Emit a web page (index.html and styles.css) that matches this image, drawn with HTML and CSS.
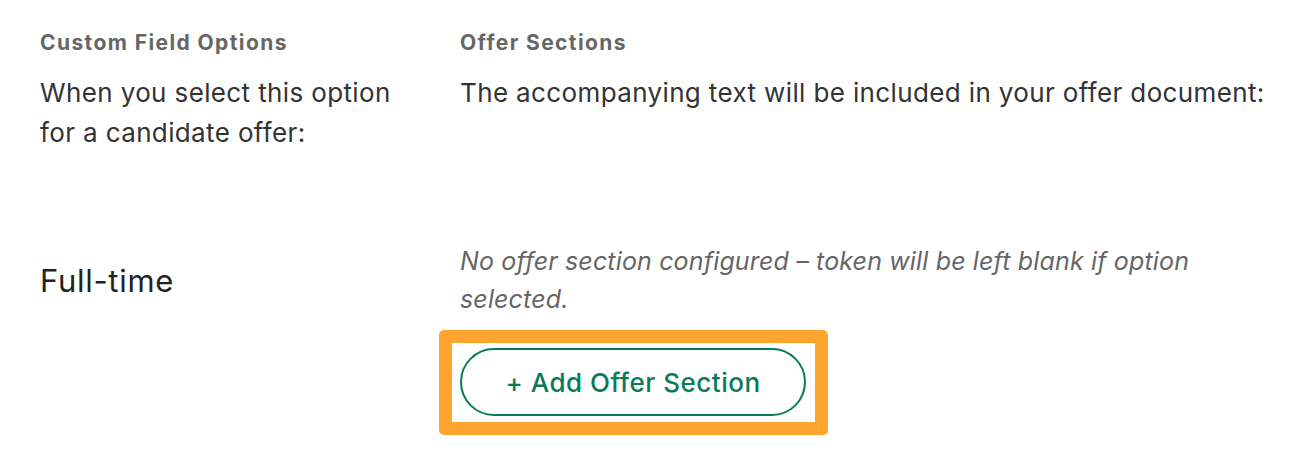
FILE: index.html
```html
<!DOCTYPE html>
<html>
<head>
<meta charset="utf-8">
<link rel="stylesheet" href="styles.css">
</head>
<body>
<div class="page">
  <div class="row header-row">
    <div class="col-left">
      <div class="heading">Custom Field Options</div>
      <div class="desc">When you select this option for a candidate offer:</div>
    </div>
    <div class="col-right">
      <div class="heading">Offer Sections</div>
      <div class="desc">The accompanying text will be included in your offer document:</div>
    </div>
  </div>
  <div class="row option-row">
    <div class="col-left">
      <div class="option-name">Full-time</div>
    </div>
    <div class="col-right">
      <div class="empty-note">No offer section configured – token will be left blank if option selected.</div>
      <div class="highlight">
        <button class="add-btn">+ Add Offer Section</button>
      </div>
    </div>
  </div>
</div>
</body>
</html>
```

FILE: styles.css
```css
* { box-sizing: border-box; }
html, body { margin: 0; padding: 0; background: #fff; }
body {
  font-family: Inter, "Liberation Sans", sans-serif;
  color: #333;
}
.page {
  padding: 30px 10px 0 40px;
}
.row {
  display: flex;
}
.col-left {
  width: 420px;
  flex: none;
}
.col-right {
  flex: 1;
}
.heading {
  font-size: 21px;
  font-weight: 700;
  letter-spacing: 1.4px;
  color: #666;
  line-height: 26px;
}
.desc {
  margin-top: 17px;
  font-size: 26px;
  letter-spacing: 0.37px;
  line-height: 40px;
  color: #333;
  width: 370px;
}
.col-right .desc { width: auto; white-space: nowrap; }
.option-row {
  margin-top: 89px;
}
.option-row .col-left {
  padding-top: 19px;
}
.option-name {
  font-size: 31px;
  letter-spacing: 0.7px;
  line-height: 40px;
  color: #222;
}
.empty-note {
  font-size: 25px;
  letter-spacing: 0.15px;
  font-style: italic;
  line-height: 38px;
  color: #666;
  width: 770px;
}
.highlight {
  display: inline-block;
  margin-top: 12px;
  margin-left: -21px;
  border: 13px solid #ffa42e;
  border-radius: 5px;
  padding: 5px 9px 6px 8px;
}
.add-btn {
  display: block;
  width: 346px;
  height: 68px;
  border: 2px solid #0a7b58;
  border-radius: 34px;
  background: #fff;
  color: #0a7b58;
  font-family: Inter, "Liberation Sans", sans-serif;
  font-size: 26px;
  letter-spacing: 0.5px;
  font-weight: 500;
  padding: 0;
}
```
